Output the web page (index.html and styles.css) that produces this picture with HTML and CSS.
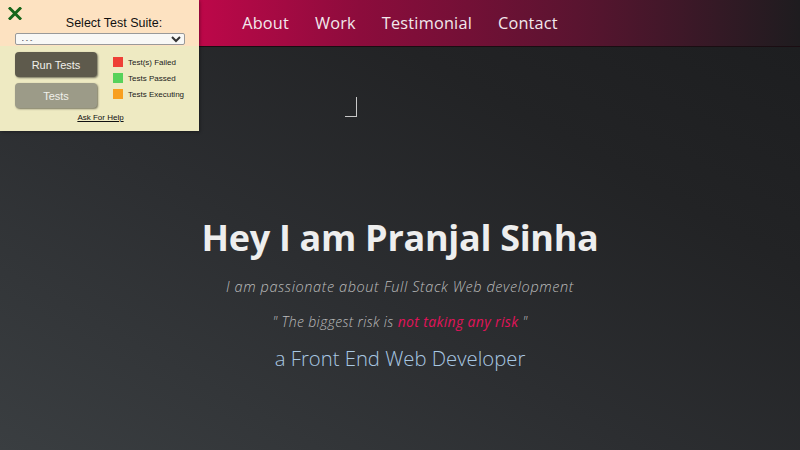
FILE: index.html
```html
<!DOCTYPE html>
<html>
<head>
<meta charset="utf-8">
<link rel="stylesheet" href="styles.css">
</head>
<body>
<header class="nav">
  <a class="nav-link">About</a>
  <a class="nav-link">Work</a>
  <a class="nav-link">Testimonial</a>
  <a class="nav-link">Contact</a>
</header>
<span class="cursor-mark"></span>
<main class="hero">
  <h1 class="hero-title">Hey I am Pranjal Sinha</h1>
  <p class="hero-sub">I am passionate about Full Stack Web development</p>
  <p class="hero-quote">" The biggest risk is <span class="accent">not taking any risk</span> "</p>
  <p class="hero-role">a Front End Web Developer</p>
</main>
<aside class="test-panel">
  <div class="panel-top">
    <svg class="close-icon" width="14" height="13" viewBox="0 0 14 13"><path d="M2 1.5 L12 11.5 M12 1.5 L2 11.5" stroke="#17661a" stroke-width="3" stroke-linecap="square"/></svg>
    <div class="panel-label">Select Test Suite:</div>
    <select class="suite-select"><option>- - -</option></select>
  </div>
  <div class="panel-body">
    <div class="btn-col">
      <button class="btn btn-run">Run Tests</button>
      <button class="btn btn-tests">Tests</button>
    </div>
    <ul class="legend">
      <li><span class="sw sw-red"></span>Test(s) Failed</li>
      <li><span class="sw sw-green"></span>Tests Passed</li>
      <li><span class="sw sw-orange"></span>Tests Executing</li>
    </ul>
  </div>
  <a class="help">Ask For Help</a>
</aside>
</body>
</html>
```
FILE: styles.css
```css
html, body { margin: 0; padding: 0; }
body {
  width: 800px;
  height: 450px;
  overflow: hidden;
  position: relative;
  background: linear-gradient(to top right, #3a3e41 0%, #2c2e31 40%, #222325 70%, #1c1d1f 100%);
  font-family: "Open Sans", sans-serif;
}
.nav {
  height: 46px;
  border-bottom: 1px solid #1a0d12;
  background: linear-gradient(90deg, #d2034f 0%, #c4074b 22%, #8c0c3c 45%, #5a1430 72%, #1e1c1f 100%);
  display: flex;
  justify-content: center;
  align-items: center;
  gap: 26px;
}
.nav-link {
  color: #f2e8ec;
  font-size: 16.3px;
  font-weight: 400;
  letter-spacing: 0.2px;
}
.cursor-mark {
  position: absolute;
  left: 345px;
  top: 97px;
  width: 11px;
  height: 19px;
  border-right: 1.5px solid #c8c8c8;
  border-bottom: 1.5px solid #c8c8c8;
}
.hero {
  text-align: center;
  padding-top: 169px;
}
.hero-title {
  margin: 0;
  color: #eeeeee;
  font-family: "Open Sans", sans-serif;
  font-weight: 700;
  font-size: 36px;
  line-height: 44px;
  letter-spacing: -0.3px;
}
.hero-sub {
  margin: 17px 0 0;
  color: #bdbdbd;
  font-style: italic;
  font-weight: 300;
  font-size: 14.5px;
  line-height: 20px;
  letter-spacing: 0.6px;
}
.hero-quote {
  margin: 15px 0 0;
  color: #bdbdbd;
  font-style: italic;
  font-weight: 300;
  font-size: 14px;
  line-height: 20px;
  letter-spacing: 0.35px;
}
.accent { color: #e0135a; font-weight: 400; }
.hero-role {
  margin: 13px 0 0;
  color: #a9c8e3;
  font-size: 20.3px;
  font-weight: 300;
  line-height: 26px;
}
.test-panel {
  position: absolute;
  left: 0;
  top: 0;
  width: 199px;
  height: 131px;
  background: #eeeac2;
  box-shadow: 1px 1px 3px rgba(0,0,0,0.35);
  font-family: "Liberation Sans", Arial, sans-serif;
  display: flex;
  flex-direction: column;
}
.panel-top {
  background: #fde2c1;
  height: 46px;
  position: relative;
  display: flex;
  flex-direction: column;
  align-items: center;
}
.close-icon { position: absolute; left: 8px; top: 7px; }
.panel-label {
  font-size: 12.5px;
  color: #111;
  margin-top: 16px;
  margin-left: 29px;
}
.suite-select {
  margin-top: 3px;
  width: 170px;
  height: 12px;
  font-size: 7px;
  padding: 0 2px;
  border: 1px solid #999;
  border-radius: 2px;
  background: #f8f8f6;
  color: #333;
}
.panel-body {
  display: flex;
  padding: 6px 0 0 15px;
  gap: 16px;
}
.btn-col { display: flex; flex-direction: column; gap: 6px; }
.btn {
  width: 82px;
  height: 25px;
  border: none;
  border-radius: 4px;
  color: #f0f0ea;
  font-family: "Liberation Sans", Arial, sans-serif;
  font-size: 11px;
  box-shadow: 1px 1px 2px rgba(0,0,0,0.5);
}
.btn-run { background: #5e5a4c; }
.btn-tests { background: #9c9b88; }
.legend {
  list-style: none;
  margin: 5px 0 0;
  padding: 0;
  display: flex;
  flex-direction: column;
  gap: 6px;
  font-size: 8px;
  color: #1a1a1a;
}
.legend li { display: flex; align-items: center; gap: 5px; height: 10px; }
.sw { width: 10px; height: 10px; display: inline-block; }
.sw-red { background: #ee4036; }
.sw-green { background: #57d25a; }
.sw-orange { background: #f8a020; }
.help {
  align-self: center;
  margin-top: 5px;
  margin-left: 2px;
  font-size: 8px;
  color: #111;
  text-decoration: underline;
}
```
